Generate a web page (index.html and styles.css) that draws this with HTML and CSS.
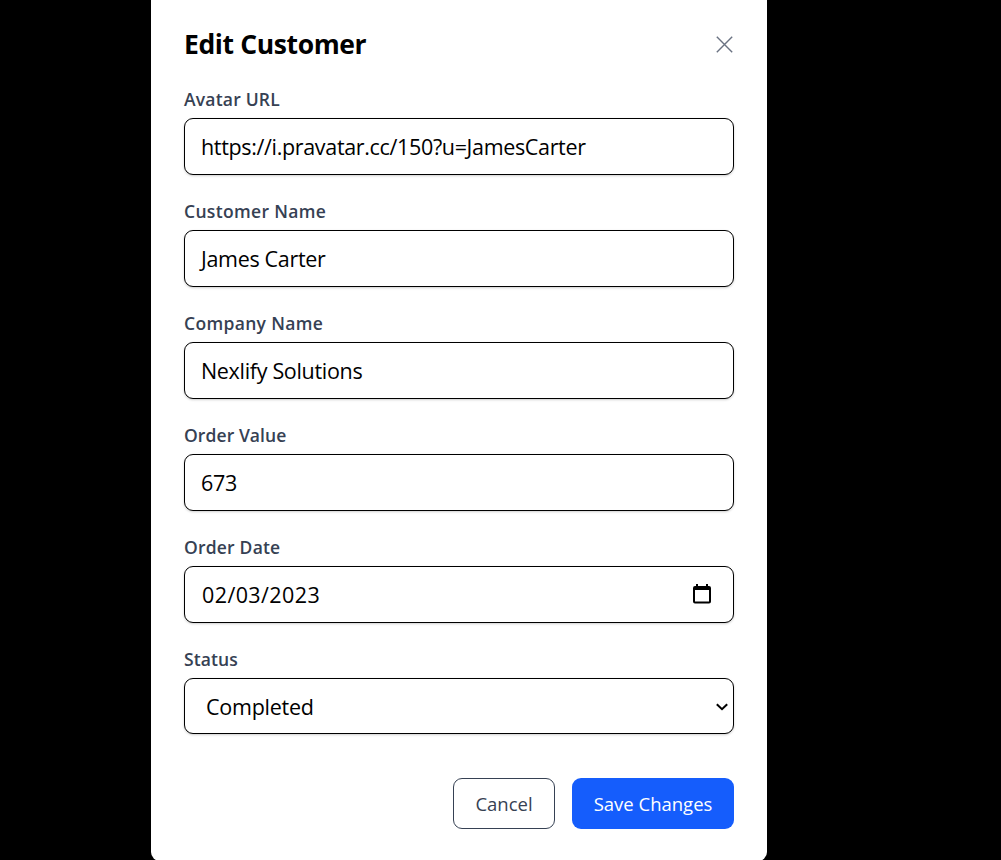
FILE: index.html
```html
<!DOCTYPE html>
<html lang="en">
<head>
<meta charset="utf-8">
<title>Edit Customer</title>
<link rel="stylesheet" href="styles.css">
</head>
<body>
<main class="modal">
  <header class="modal-header">
    <h1 class="title">Edit Customer</h1>
    <button class="close" type="button" aria-label="Close"><svg width="17" height="17" viewBox="0 0 17 17"><path d="M.8.8l15.4 15.4M16.2.8L.8 16.2" fill="none" stroke="#6a7282" stroke-width="1.4"/></svg></button>
  </header>
  <form class="form">
    <div class="field"><label class="label" for="avatar">Avatar URL</label><input class="control url" id="avatar" value="https://i.pravatar.cc/150?u=JamesCarter"></div>
    <div class="field"><label class="label label-wide" for="name">Customer Name</label><input class="control" id="name" value="James Carter"></div>
    <div class="field"><label class="label label-wide" for="company">Company Name</label><input class="control" id="company" value="Nexlify Solutions"></div>
    <div class="field"><label class="label label-tight" for="value">Order Value</label><input class="control" id="value" value="673"></div>
    <div class="field"><label class="label" for="date">Order Date</label>
      <div class="control-wrap"><input class="control date" id="date" value="02/03/2023"><svg class="calendar" width="18" height="20" viewBox="0 0 18 20"><path d="M2 2h14a2 2 0 0 1 2 2v13.500a2 2 0 0 1-2 2H2a2 2 0 0 1-2-2V4a2 2 0 0 1 2-2zM2 6v11.600h14V6z" fill="#000" fill-rule="evenodd"/><path d="M3 0h2v3H3zM13 0h2v3h-2z"/></svg></div></div>
    <div class="field"><label class="label label-tight" for="status">Status</label>
      <div class="control-wrap"><select class="control status" id="status"><option>Completed</option></select><svg class="chevron" width="12" height="8" viewBox="0 0 12 8"><path d="M.8 1.200L6 6.200l5.200-5" fill="none" stroke="#000" stroke-width="2"/></svg></div></div>
    <div class="actions"><button class="button cancel" type="button">Cancel</button><button class="button save" type="button">Save Changes</button></div>
  </form>
</main>
</body>
</html>
```
FILE: styles.css
```css
* { box-sizing: border-box; }
body {
  margin: 0;
  height: 860px;
  overflow: hidden;
  background: #000;
  font-family: "Open Sans", "Noto Sans", sans-serif;
}
.modal {
  width: 616px;
  height: 869px;
  margin: -8px 0 0 151px;
  padding: 33px;
  border-radius: 9px;
  background: #fff;
}
.modal-header {
  display: flex;
  align-items: center;
  justify-content: space-between;
  height: 38px;
}
.title {
  margin: 0;
  font-size: 26.500px;
  line-height: 38px;
  font-weight: 700;
  letter-spacing: -0.38px;
}
.close {
  display: flex;
  padding: 0;
  margin-right: 1px;
  border: 0;
  background: none;
}
.form { margin-top: 23px; }
.field {
  display: flex;
  flex-direction: column;
  height: 112px;
}
.label {
  height: 32px;
  line-height: 27px;
  font-size: 17.500px;
  font-weight: 600;
  letter-spacing: 0.2px;
  color: #364153;
}
.label-wide { letter-spacing: 0.33px; }
.label-tight { letter-spacing: 0.08px; }
.control {
  display: block;
  width: 100%;
  height: 57px;
  padding: 0 12px;
  text-indent: 4px;
  border: 1px solid #000;
  border-radius: 9px;
  outline: 0;
  background: #fff;
  color: #000;
  font-family: inherit;
  font-size: 21.500px;
  letter-spacing: -0.32px;
  box-shadow: 0 1px 3px rgba(0, 0, 0, .1), 0 1px 2px rgba(0, 0, 0, .1);
}
.url { letter-spacing: -0.34px; }
.date { padding-left: 13px; letter-spacing: 0.4px; }
.control-wrap { position: relative; }
.calendar { position: absolute; right: 23px; top: 18px; }
.status { height: 56px; padding-left: 21px; text-indent: 0; letter-spacing: -0.25px; appearance: none; }
.chevron { position: absolute; right: 6px; top: 25px; }
.actions {
  display: flex;
  justify-content: flex-end;
  gap: 17px;
  margin-top: 20px;
}
.button {
  height: 51px;
  padding: 0;
  border-radius: 9px;
  font-family: inherit;
  font-size: 18.500px;
}
.cancel { width: 102px; border: 1px solid #364153; background: #fff; color: #364153; }
.save { width: 162px; border: 0; background: #155dfc; color: #fff; }
```
